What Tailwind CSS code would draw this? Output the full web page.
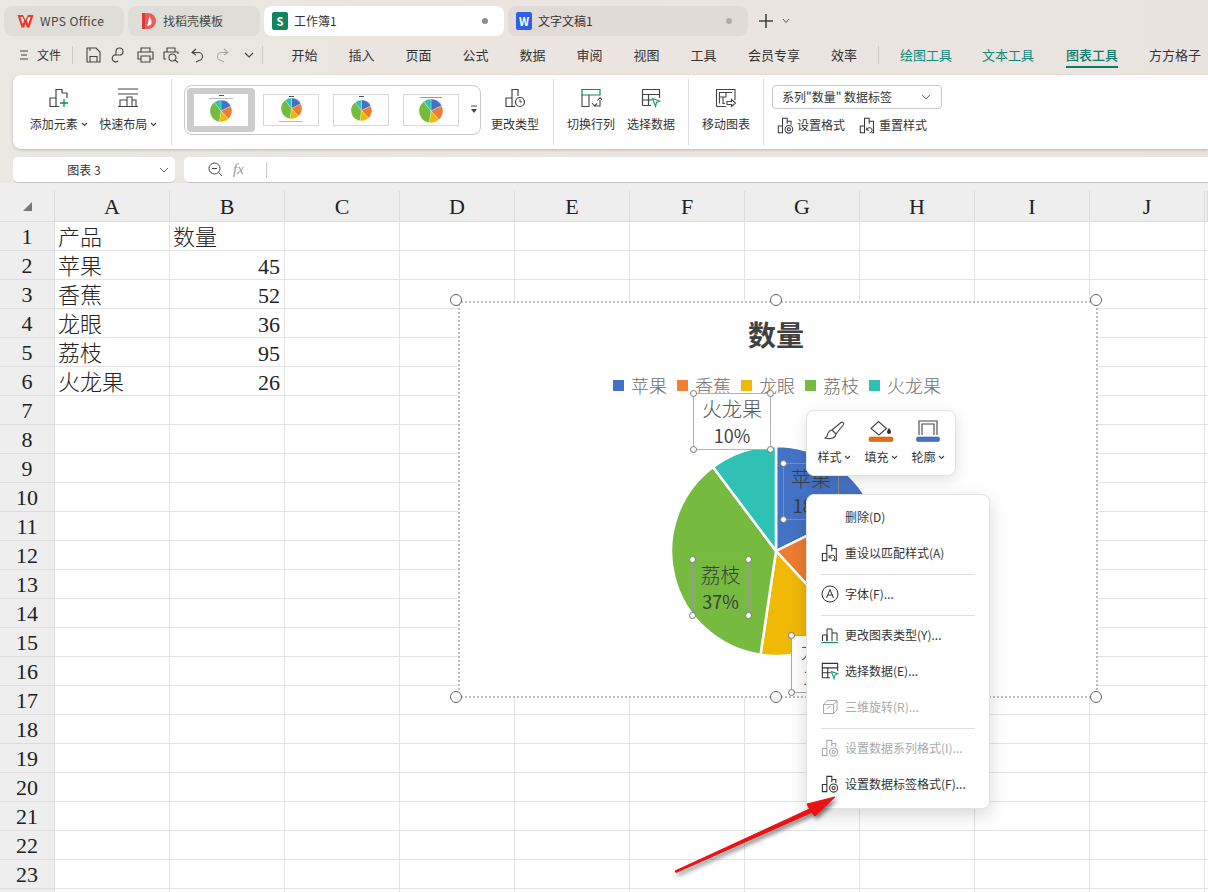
<!DOCTYPE html>
<html lang="zh-CN">
<head>
    <meta charset="UTF-8">
    <title>工作簿1</title>
    <script src="https://cdn.jsdelivr.net/npm/@tailwindcss/browser@4"></script>
</head>
<body class="font-['Noto_Sans_CJK_SC','Noto_Sans',sans-serif] text-[#333] bg-white overflow-hidden">
<!-- shared shapes -->
<svg class="hidden">
    <symbol id="pie" viewBox="0 0 212 212">
        <g transform="translate(1 1)" stroke="#fff" stroke-width="2.500">
        <path d="M105 105V0A105 105 0 0 1 199.2 58.6Z" fill="#4472c4"/>
        <path d="M105 105L199.2 58.6A105 105 0 0 1 176 182.4Z" fill="#ed7d31"/>
        <path d="M105 105L176 182.4A105 105 0 0 1 89.5 208.8Z" fill="#f0b905"/>
        <path d="M105 105L89.5 208.8A105 105 0 0 1 42 21Z" fill="#76bb40"/>
        <path d="M105 105L42 21A105 105 0 0 1 105 0Z" fill="#2ec1b4"/>
        </g>
    </symbol>
    <symbol id="chev" viewBox="0 0 7 5">
        <path d="M1 1L3.500 3.500L6 1" fill="none" stroke="#444" stroke-width="1.100"/>
    </symbol>
    <symbol id="tbl" viewBox="0 0 20 20">
        <path d="M1.5 17.5V1.5H18.5V10M1.5 6.5H18.5M1.5 12H11M7.5 6.5V17.5M1.5 17.5H10" fill="none" stroke="currentColor" stroke-width="1.2"/>
        <path d="M11.5 10.5L18.5 13L15.5 14.5L14.5 18.5Z" fill="none" stroke="#1b9e77" stroke-width="1.2"/>
    </symbol>
    <symbol id="gear" viewBox="0 0 20 20">
        <path d="M1.5 18.5V10.5H6.5V18.5ZM6.5 18.5V1.5H12V8M12 5H16.5V9" fill="none" stroke="currentColor" stroke-width="1.2"/>
        <circle cx="14" cy="14.5" r="4.5" fill="#fff" stroke="currentColor" stroke-width="1.2"/>
        <circle cx="14" cy="14.5" r="1.8" fill="none" stroke="currentColor" stroke-width="1.2"/>
    </symbol>
    <symbol id="reset" viewBox="0 0 20 20">
        <path d="M1.5 18.5V10.5H6.5V18.5ZM6.5 18.5V1.5H12V8M12 5H17V18.5H15" fill="none" stroke="currentColor" stroke-width="1.2"/>
        <path d="M9.5 15A3 3 0 1 1 12.5 18.5M9 12.5V15.5H12" fill="none" stroke="currentColor" stroke-width="1.1"/>
    </symbol>
</svg>

<div class="relative w-[1208px] h-[892px] overflow-hidden">
    <!-- title + ribbon area -->
    <div class="h-[191px] bg-gradient-to-r from-[#e9e8e2] via-[#ece4e1] to-[#ebe3e0]">
        <!-- tabs -->
        <div class="flex items-center h-[30px] translate-y-[6px] pl-1 gap-1 text-xs">
            <div class="w-[120px] h-[30px] rounded-lg bg-[#dfddd7] flex items-center pl-[13px] gap-[6px]">
                <svg class="w-[17px] h-[14px]" viewBox="0 0 17 14"><path d="M0.5 1H6L8.5 6L11 1H16.5L12.5 13.5H9.8L8.5 9.5L7.2 13.5H4.5Z" fill="#e93a2c"/><path d="M3.5 3L5.8 10L7 6.2L5.5 3ZM13.5 3H11.5L10 6.2L11.2 10Z" fill="#fff"/></svg>
                <span class="text-[#444] tracking-[0.4px]">WPS Office</span>
            </div>
            <div class="w-[132px] h-[30px] rounded-lg bg-[#dfddd7] flex items-center pl-[14px] gap-[7px]">
                <svg class="w-[14px] h-[18px]" viewBox="0 0 14 18"><path d="M0 1H6A8 8 0 0 1 6 17H0Z" fill="#ee5a5a"/><path d="M0 1H3V17H0Z" fill="#d93a3a"/><path d="M7.5 4C8.5 7 10 8 9.5 11C9 13.5 6 14.5 4.5 13C6.5 13 6 10 6.5 8C7 6.5 7.5 5.5 7.5 4Z" fill="#fff"/></svg>
                <span class="text-[#444]">找稻壳模板</span>
            </div>
            <div class="w-[240px] h-[30px] rounded-lg bg-white flex items-center pl-2 pr-4 gap-[6px]">
                <span class="w-[16px] h-[18px] rounded-[2px] bg-[#11855f] text-white text-[11px] font-bold flex items-center justify-center">S</span>
                <span class="flex-1">工作簿1</span>
                <span class="w-[6px] h-[6px] rounded-full bg-[#8f8f8f]"></span>
            </div>
            <div class="w-[240px] h-[30px] rounded-lg bg-[#e1dad7] flex items-center pl-2 pr-4 gap-[6px]">
                <span class="w-[16px] h-[18px] rounded-[2px] bg-[#2f5fe8] text-white text-[11px] font-bold flex items-center justify-center">W</span>
                <span class="flex-1">文字文稿1</span>
                <span class="w-[6px] h-[6px] rounded-full bg-[#b0abaa]"></span>
            </div>
            <svg class="w-[16px] h-[16px] ml-[6px]" viewBox="0 0 16 16"><path d="M8 1V15M1 8H15" stroke="#444" stroke-width="1.6"/></svg>
            <svg class="w-[8px] h-[6px] ml-[4px]" viewBox="0 0 8 6"><path d="M1 1L4 4.5L7 1" fill="none" stroke="#555"/></svg>
        </div>

        <!-- menu row -->
        <div class="flex items-center h-[30px] mt-[11px] pb-[2px] text-[13px] text-[#333] whitespace-nowrap">
            <svg class="w-[10px] h-[10px] ml-[19px] shrink-0" viewBox="0 0 10 10"><path d="M1 1H9M2 5H8M1 9H9" stroke="#444"/></svg>
            <span class="ml-[8px] w-[24px] shrink-0 text-xs">文件</span>
            <span class="w-px h-[18px] bg-[#cfcbc6] ml-[11px] shrink-0"></span>
            <div class="flex items-center w-[182px] ml-[7px] text-[#444] shrink-0">
                <svg class="w-[26px] h-[16px]" viewBox="0 0 26 16"><path d="M7 1H16L20 5V15H7ZM10 15V9.5H17V15M10 1V4" fill="none" stroke="currentColor" stroke-width="1.1"/></svg>
                <svg class="w-[26px] h-[16px]" viewBox="0 0 26 16"><path d="M10 8V4.5A3.5 3.5 0 1 1 14 8H10.5A3.5 3.5 0 1 0 12 14" fill="none" stroke="currentColor" stroke-width="1.1"/></svg>
                <svg class="w-[26px] h-[16px]" viewBox="0 0 26 16"><path d="M9 5V1H18V5M9 12H6V5H21V12H18M9 9H18V15H9Z" fill="none" stroke="currentColor" stroke-width="1.1"/></svg>
                <svg class="w-[26px] h-[16px]" viewBox="0 0 26 16"><path d="M9 5V1H17V5M8 12H6V5H20V7M11 10.5A3.5 3.5 0 1 0 18 10.5A3.5 3.5 0 1 0 11 10.5M17 13L20 15.5" fill="none" stroke="currentColor" stroke-width="1.1"/></svg>
                <svg class="w-[26px] h-[16px]" viewBox="0 0 26 16"><path d="M12 2L8 5.5L12 8M8 5.5H14A4 4 0 0 1 15 13.5L12 15" fill="none" stroke="currentColor" stroke-width="1.1"/></svg>
                <svg class="w-[26px] h-[16px]" viewBox="0 0 26 16"><path d="M14 2L18 5.5L14 8M18 5.5H12A4 4 0 0 0 11 13.5L14 15" fill="none" stroke="#aaa" stroke-width="1.1"/></svg>
                <svg class="w-[26px] h-[16px]" viewBox="0 0 26 16"><path d="M9 6L13 10L17 6" fill="none" stroke="currentColor" stroke-width="1.2"/></svg>
            </div>
            <span class="w-px h-[18px] bg-[#cfcbc6] shrink-0"></span>
            <div class="flex items-center ml-[13px] shrink-0">
                <span class="w-[57px] text-center">开始</span>
                <span class="w-[57px] text-center">插入</span>
                <span class="w-[57px] text-center">页面</span>
                <span class="w-[57px] text-center">公式</span>
                <span class="w-[57px] text-center">数据</span>
                <span class="w-[57px] text-center">审阅</span>
                <span class="w-[57px] text-center">视图</span>
                <span class="w-[57px] text-center">工具</span>
                <span class="w-[84px] text-center">会员专享</span>
                <span class="w-[56px] text-center">效率</span>
            </div>
            <span class="w-px h-[18px] bg-[#cfcbc6] ml-[6px] shrink-0"></span>
            <span class="w-[94px] shrink-0 text-center text-[#0f8a7d]">绘图工具</span>
            <span class="w-[70px] shrink-0 text-center text-[#0f8a7d]">文本工具</span>
            <span class="relative w-[98px] shrink-0 text-center text-[#0c7a6c] font-medium">图表工具
                <span class="absolute left-[23px] -bottom-[3px] w-[52px] h-[2px] bg-[#047a69]"></span>
            </span>
            <span class="w-[68px] shrink-0 text-center">方方格子</span>
        </div>

        <!-- ribbon -->
        <div class="flex items-start h-[74px] mt-[4px] ml-[13px] bg-white rounded-l-lg shadow-[0_1px_3px_rgba(0,0,0,0.2)] text-xs">
            <div class="flex items-start w-[150px] pl-[11px] pt-[13px]">
                <div class="w-[70px] flex flex-col items-center">
                    <svg class="w-[22px] h-[20px] text-[#444]" viewBox="0 0 22 20"><path d="M2 18.5V10H8V18.5ZM8 18.5H11M8 10V1.5H14V5M14 5H19V10" fill="none" stroke="currentColor" stroke-width="1.2"/><path d="M16 11V19M12 15H20" stroke="#0a8a5f" stroke-width="1.3"/></svg>
                    <span class="mt-[8px] leading-4 whitespace-nowrap flex items-center gap-[3px]">添加元素<svg class="w-[7px] h-[5px]"><use href="#chev"/></svg></span>
                </div>
                <div class="w-[70px] flex flex-col items-center">
                    <svg class="w-[22px] h-[20px] text-[#444]" viewBox="0 0 22 20"><path d="M1 1H21M1 6H21M1 18.5H21M3 18.5V12H10V18.5M10 18.5V9H15V18.5M15 12H19V18.5" fill="none" stroke="currentColor" stroke-width="1.1"/></svg>
                    <span class="mt-[8px] leading-4 whitespace-nowrap flex items-center gap-[3px]">快速布局<svg class="w-[7px] h-[5px]"><use href="#chev"/></svg></span>
                </div>
            </div>
            <span class="w-px h-[66px] bg-[#ddd] ml-[8px] mt-[4px]"></span>

            <!-- chart style gallery -->
            <div class="relative flex items-center w-[297px] h-[50px] ml-[12px] mt-[10px] border border-[#c9c9c9] rounded-lg pl-[2px]">
                <div class="w-[68px] h-[44px] bg-[#cdcdcd] rounded-sm flex items-center justify-center">
                    <div class="w-[54px] h-[32px] bg-white flex flex-col items-center">
                        <span class="w-[5px] h-px bg-[#555] mt-[1px]"></span>
                        <span class="w-[24px] h-px bg-[#bbb] mt-[2px]"></span>
                        <svg class="w-[22px] h-[22px] mt-[1px]"><use href="#pie"/></svg>
                    </div>
                </div>
                <div class="w-[56px] h-[32px] ml-[8px] border border-[#d8d8d8] flex flex-col items-center">
                    <span class="w-[5px] h-px bg-[#555] mt-[1px]"></span>
                    <svg class="w-[21px] h-[21px] mt-[1px]"><use href="#pie"/></svg>
                    <span class="w-[24px] h-px bg-[#bbb] mt-[2px]"></span>
                </div>
                <div class="w-[56px] h-[32px] ml-[14px] border border-[#d8d8d8] flex flex-col items-center">
                    <span class="w-[5px] h-px bg-[#555] mt-[1px]"></span>
                    <svg class="w-[21px] h-[21px] mt-[3px]"><use href="#pie"/></svg>
                </div>
                <div class="w-[56px] h-[32px] ml-[14px] border border-[#d8d8d8] flex flex-col items-center">
                    <span class="w-[22px] h-px bg-[#b88] mt-[2px]"></span>
                    <svg class="w-[24px] h-[24px] mt-[1px]"><use href="#pie"/></svg>
                </div>
                <svg class="absolute right-[2px] top-[19px] w-[8px] h-[10px]" viewBox="0 0 8 10"><path d="M1 1H7" stroke="#444"/><path d="M1 4H7L4 8Z" fill="#444"/></svg>
            </div>

            <div class="w-[68px] flex flex-col items-center pt-[13px]">
                <svg class="w-[22px] h-[20px] text-[#444]" viewBox="0 0 22 20"><path d="M2 18.5V10H8V18.5ZM8 18.5H11M8 10V1.5H14V8" fill="none" stroke="currentColor" stroke-width="1.2"/><circle cx="16" cy="14" r="4.5" fill="#fff" stroke="currentColor" stroke-width="1.2"/><path d="M16 11.5V14H18" fill="none" stroke="currentColor"/></svg>
                <span class="mt-[8px] leading-4">更改类型</span>
            </div>
            <span class="w-px h-[66px] bg-[#ddd] ml-[4px] mt-[4px]"></span>

            <div class="w-[60px] flex flex-col items-center ml-[7px] pt-[13px]">
                <svg class="w-[22px] h-[20px] text-[#444]" viewBox="0 0 22 20"><path d="M2 1.5H20V7H2Z" fill="none" stroke="#0a8a5f" stroke-width="1.2"/><path d="M2 7V18.5H9V7M14 18H20V12M12 15L14.5 18L17 15.5M20 9.5L17.5 12.5M20 9.5L22 12" fill="none" stroke="currentColor" stroke-width="1.1"/></svg>
                <span class="mt-[8px] leading-4">切换行列</span>
            </div>
            <div class="w-[60px] flex flex-col items-center pt-[13px]">
                <svg class="w-[22px] h-[20px] text-[#444]"><use href="#tbl"/></svg>
                <span class="mt-[8px] leading-4">选择数据</span>
            </div>
            <span class="w-px h-[66px] bg-[#ddd] ml-[7px] mt-[4px]"></span>

            <div class="w-[60px] flex flex-col items-center ml-[7px] pt-[13px]">
                <svg class="w-[22px] h-[20px] text-[#444]" viewBox="0 0 22 20"><path d="M1.5 18.5V1.5H20V12M1.5 18.5H11M4.5 15.5V4.5H17M4.5 9H11V4.5M8 9V15.5H10" fill="none" stroke="currentColor" stroke-width="1.1"/><path d="M12 13.5H16.5V11.5L20.5 15L16.5 18.5V16.5H12Z" fill="#fff" stroke="currentColor" stroke-width="1.1"/></svg>
                <span class="mt-[8px] leading-4">移动图表</span>
            </div>
            <span class="w-px h-[66px] bg-[#ddd] ml-[7px] mt-[4px]"></span>

            <div class="ml-[8px] flex flex-col pt-[10px]">
                <div class="w-[170px] h-[24px] border border-[#c9c9c9] rounded flex items-center pl-[9px] pr-[10px] justify-between">
                    <span>系列"数量" 数据标签</span>
                    <svg class="w-[10px] h-[6px]" viewBox="0 0 10 6"><path d="M1 1L5 5L9 1" fill="none" stroke="#666"/></svg>
                </div>
                <div class="flex items-center mt-[6px] pl-[5px]">
                    <svg class="w-[17px] h-[17px] text-[#333]"><use href="#gear"/></svg>
                    <span class="ml-[3px] leading-5">设置格式</span>
                    <svg class="w-[17px] h-[17px] ml-[14px] text-[#333]"><use href="#reset"/></svg>
                    <span class="ml-[3px] leading-5">重置样式</span>
                </div>
            </div>
        </div>

        <!-- name box and formula bar -->
        <div class="flex h-[26px] mt-[8px] ml-[13px] gap-[9px] text-xs">
            <div class="w-[162px] h-full bg-white rounded-[5px] border-b border-[#c4c4c4] flex items-center relative">
                <span class="w-full text-center pr-[20px]">图表 3</span>
                <svg class="absolute right-[6px] top-[10px] w-[10px] h-[6px]" viewBox="0 0 10 6"><path d="M1 1L5 5L9 1" fill="none" stroke="#666"/></svg>
            </div>
            <div class="flex-1 h-full bg-white rounded-l-[5px] border-b border-[#c4c4c4] flex items-center pl-[24px]">
                <svg class="w-[15px] h-[15px]" viewBox="0 0 15 15"><circle cx="6.5" cy="6.5" r="5.5" fill="none" stroke="#444"/><path d="M4 6.5H9M10.5 10.5L14 14" stroke="#444"/></svg>
                <span class="ml-[10px] w-[33px] text-[#999] italic font-['Liberation_Serif',serif] text-[15px]">fx</span>
                <span class="w-px h-[16px] bg-[#ccc]"></span>
            </div>
        </div>
        <div class="h-[8px] bg-[#eeeeee]"></div>
    </div>

    <!-- sheet: filled in by the script below -->
    <div id="sheet" class="grid grid-cols-[55px_repeat(10,115px)_3px] grid-rows-[31px] auto-rows-[29px] bg-white font-['Liberation_Serif','Noto_Sans_CJK_SC',serif] font-light text-[22px] text-[#222]"></div>

    <!-- chart -->
    <div class="absolute left-[458px] top-[301px] w-[640px] h-[397px] bg-white border-2 border-dotted border-[#bdbdbd] font-['Noto_Sans_CJK_SC',sans-serif] text-[#6f6f6f]">
        <div class="text-center text-[28px] font-bold text-[#404040] leading-9 mt-[13px] pr-[4px]">数量</div>
        <div class="flex items-center justify-center gap-[10px] mt-[21px] text-[18px] font-light leading-6 pr-[2px]">
            <span class="flex items-center gap-[7px]"><i class="w-[11px] h-[11px] bg-[#4472c4]"></i>苹果</span>
            <span class="flex items-center gap-[7px]"><i class="w-[11px] h-[11px] bg-[#f08030]"></i>香蕉</span>
            <span class="flex items-center gap-[7px]"><i class="w-[11px] h-[11px] bg-[#f0b905]"></i>龙眼</span>
            <span class="flex items-center gap-[7px]"><i class="w-[11px] h-[11px] bg-[#76bb40]"></i>荔枝</span>
            <span class="flex items-center gap-[7px]"><i class="w-[11px] h-[11px] bg-[#2ec1b4]"></i>火龙果</span>
        </div>
        <svg class="absolute left-[210px] top-[142px] w-[212px] h-[212px]"><use href="#pie"/></svg>

        <!-- data labels -->
        <div class="absolute left-[233px] top-[90px] w-[78px] h-[57px] bg-white border border-[#b0b0bc] flex flex-col items-center justify-center text-[20px] leading-[26px] font-light text-[#555]">
            <span>火龙果</span><span class="text-[18px] font-normal text-[#444]">10%</span>
            <i class="absolute -left-[4px] -top-[4px] w-[7px] h-[7px] rounded-full bg-white border border-[#777]"></i>
            <i class="absolute -right-[4px] -top-[4px] w-[7px] h-[7px] rounded-full bg-white border border-[#777]"></i>
            <i class="absolute -left-[4px] -bottom-[4px] w-[7px] h-[7px] rounded-full bg-white border border-[#777]"></i>
            <i class="absolute -right-[4px] -bottom-[4px] w-[7px] h-[7px] rounded-full bg-white border border-[#777]"></i>
        </div>
        <div class="absolute left-[323px] top-[160px] w-[56px] h-[57px] border border-[#8c8c8c] flex flex-col items-center justify-center text-[20px] leading-[26px] font-light text-[#3d3d3d]">
            <span>苹果</span><span class="text-[18px] font-normal">18%</span>
            <i class="absolute -left-[4px] -top-[4px] w-[7px] h-[7px] rounded-full bg-white border border-[#777]"></i>
            <i class="absolute -left-[4px] -bottom-[4px] w-[7px] h-[7px] rounded-full bg-white border border-[#777]"></i>
        </div>
        <div class="absolute left-[232px] top-[256px] w-[57px] h-[57px] border border-[#999] flex flex-col items-center justify-center text-[20px] leading-[26px] font-light text-[#3d3d3d]">
            <span>荔枝</span><span class="text-[18px] font-normal">37%</span>
            <i class="absolute -left-[4px] -top-[4px] w-[7px] h-[7px] rounded-full bg-white border border-[#777]"></i>
            <i class="absolute -right-[4px] -top-[4px] w-[7px] h-[7px] rounded-full bg-white border border-[#777]"></i>
            <i class="absolute -left-[4px] -bottom-[4px] w-[7px] h-[7px] rounded-full bg-white border border-[#777]"></i>
            <i class="absolute -right-[4px] -bottom-[4px] w-[7px] h-[7px] rounded-full bg-white border border-[#777]"></i>
        </div>
        <div class="absolute left-[331px] top-[332px] w-[60px] h-[58px] bg-white border border-[#a8a8b4] flex flex-col items-center justify-center text-[20px] leading-[26px] font-light text-[#555]">
            <span>龙眼</span><span class="text-[18px] font-normal">14%</span>
            <i class="absolute -left-[4px] -top-[4px] w-[7px] h-[7px] rounded-full bg-white border border-[#777]"></i>
            <i class="absolute -left-[4px] -bottom-[4px] w-[7px] h-[7px] rounded-full bg-white border border-[#777]"></i>
        </div>

        <!-- chart handles -->
        <i class="absolute -left-[10px] -top-[9px] w-[12px] h-[12px] rounded-full bg-white border border-[#666]"></i>
        <i class="absolute left-[310px] -top-[9px] w-[12px] h-[12px] rounded-full bg-white border border-[#666]"></i>
        <i class="absolute -right-[6px] -top-[9px] w-[12px] h-[12px] rounded-full bg-white border border-[#666]"></i>
        <i class="absolute -left-[10px] -bottom-[7px] w-[12px] h-[12px] rounded-full bg-white border border-[#666]"></i>
        <i class="absolute left-[310px] -bottom-[7px] w-[12px] h-[12px] rounded-full bg-white border border-[#666]"></i>
        <i class="absolute -right-[6px] -bottom-[7px] w-[12px] h-[12px] rounded-full bg-white border border-[#666]"></i>
    </div>

    <!-- mini toolbar -->
    <div class="absolute left-[806px] top-[410px] w-[150px] h-[66px] flex justify-center gap-[1px] bg-white border border-[#e2e2e2] rounded-lg shadow-[0_4px_14px_rgba(0,0,0,0.12)] text-xs text-[#333]">
        <div class="w-[46px] flex flex-col items-center pt-[9px]">
            <svg class="w-[24px] h-[22px]" viewBox="0 0 24 22"><path d="M10 10L19 2.5C20.5 1.5 22.5 3 21.5 4.5L14 14ZM10 10C6 10.5 5.5 14 5 16.5L3 18C8 19.5 13.5 18.5 14 14Z" fill="none" stroke="#444" stroke-width="1.1"/></svg>
            <span class="mt-[7px] leading-4 whitespace-nowrap flex items-center gap-[2px]">样式<svg class="w-[7px] h-[5px]"><use href="#chev"/></svg></span>
        </div>
        <div class="w-[46px] flex flex-col items-center pt-[9px]">
            <svg class="w-[26px] h-[22px]" viewBox="0 0 26 22"><path d="M3 8.5L10.5 1.5L18.5 8.5L11 15Z" fill="none" stroke="#444" stroke-width="1.1" /><path d="M21 8C22.5 10 23 11 23 12A2 2 0 0 1 19 12C19 11 19.500 10 21 8Z" fill="#333"/><rect x="1" y="17" width="24" height="4.500" rx="1.500" fill="#e36c14" stroke="#b6560f" stroke-width="0.5"/></svg>
            <span class="mt-[7px] leading-4 whitespace-nowrap flex items-center gap-[2px]">填充<svg class="w-[7px] h-[5px]"><use href="#chev"/></svg></span>
        </div>
        <div class="w-[46px] flex flex-col items-center pt-[9px]">
            <svg class="w-[24px] h-[22px]" viewBox="0 0 24 22"><path d="M3 15V1H21V15M6 15V4H18V15" fill="none" stroke="#444" stroke-width="1.1"/><rect x="0.500" y="17" width="23" height="4.500" rx="1.500" fill="#4472c4" stroke="#36599c" stroke-width="0.5"/></svg>
            <span class="mt-[7px] leading-4 whitespace-nowrap flex items-center gap-[2px]">轮廓<svg class="w-[7px] h-[5px]"><use href="#chev"/></svg></span>
        </div>
    </div>

    <!-- context menu -->
    <div class="absolute left-[806px] top-[494px] w-[184px] h-[315px] pt-[5px] bg-white border border-[#e2e2e2] rounded-lg shadow-[0_6px_18px_rgba(0,0,0,0.16)] text-xs text-[#333] font-['Noto_Sans_CJK_SC',sans-serif]">
        <div class="flex items-center h-[36px] pl-[38px] pb-[2px]">删除(D)</div>
        <div class="flex items-center h-[36px] pl-[14px] pb-[2px] gap-[6px]"><svg class="w-[18px] h-[18px] text-[#333]"><use href="#reset"/></svg>重设以匹配样式(A)</div>
        <div class="h-px bg-[#dedede] mx-[14px] mt-[2px]"></div>
        <div class="flex items-center h-[40px] pl-[14px] pb-[2px] gap-[6px]">
            <svg class="w-[18px] h-[18px]" viewBox="0 0 18 18"><circle cx="9" cy="9" r="8" fill="none" stroke="#333"/><path d="M5.500 13L9 4.500L12.500 13M6.800 10H11.200" fill="none" stroke="#333"/></svg>字体(F)...
        </div>
        <div class="h-px bg-[#dedede] mx-[14px]"></div>
        <div class="flex items-center h-[40px] pl-[14px] pb-[2px] gap-[6px]">
            <svg class="w-[18px] h-[18px]" viewBox="0 0 18 18"><path d="M1.500 15V9H6V15M6 15V3H11V15M11 7H16V15" fill="none" stroke="#333"/><path d="M0.500 16.500H17" stroke="#0a8a5f" stroke-width="1.100"/></svg>更改图表类型(Y)...
        </div>
        <div class="flex items-center h-[32px] pl-[14px] pb-[2px] gap-[6px]"><svg class="w-[18px] h-[18px] text-[#333]"><use href="#tbl"/></svg>选择数据(E)...</div>
        <div class="flex items-center h-[40px] pl-[14px] pb-[2px] gap-[6px] text-[#aaa]">
            <svg class="w-[18px] h-[18px]" viewBox="0 0 18 18"><path d="M2.500 6.500L6 2.500H16V12L12.500 15.500H2.500ZM2.500 6.500H12.500V15.500M12.500 6.500L16 2.500M6 11A3 3 0 0 1 10 9" fill="none" stroke="#aaa"/></svg>三维旋转(R)...
        </div>
        <div class="h-px bg-[#dedede] mx-[14px]"></div>
        <div class="flex items-center h-[40px] pl-[14px] pb-[2px] gap-[6px] text-[#aaa]"><svg class="w-[18px] h-[18px] text-[#aaa]"><use href="#gear"/></svg>设置数据系列格式(I)...</div>
        <div class="flex items-center h-[32px] pl-[14px] pb-[2px] gap-[6px]"><svg class="w-[18px] h-[18px] text-[#333]"><use href="#gear"/></svg>设置数据标签格式(F)...</div>
    </div>

    <!-- red arrow -->
    <svg class="absolute left-[660px] top-[785px] w-[190px] h-[100px] drop-shadow-[2px_3px_2px_rgba(0,0,0,0.5)]" viewBox="0 0 190 100">
        <path d="M15 86L149.500 24L147 19L175 12L155 31L151.500 27.500L16 87.500Z" fill="#ee1111" stroke="#ee1111" stroke-width="1" stroke-linejoin="round"/>
    </svg>
</div>

<script>
    // column headers, row numbers and the few filled cells
    const cols = ['A', 'B', 'C', 'D', 'E', 'F', 'G', 'H', 'I', 'J', ''];
    const data = [['产品', '数量'], ['苹果', 45], ['香蕉', 52], ['龙眼', 36], ['荔枝', 95], ['火龙果', 26]];
    const head = 'flex items-center justify-center bg-[#eeeeee] border-r border-b border-[#dcdcdc] font-["Noto_Sans"] font-normal text-[20px] text-[#555]';
    const rowHead = 'pb-[4px]';
    const cell = 'flex items-center border-r border-b border-[#e3e3e3] overflow-hidden whitespace-nowrap pl-[3px] pr-[4px] pt-[3px]';
    const right = 'justify-end';
    let html = `<div class="${head}"><svg class="w-[11px] h-[11px] mt-[1px]" viewBox="0 0 11 11"><path d="M10 1V10H1Z" fill="#777"/></svg></div>`;
    cols.forEach(c => html += `<div class="${head}">${c}</div>`);
    // row 24 only shows its top edge at the bottom of the window
    for (let r = 0; r < 24; r++) {
        html += `<div class="${head} ${rowHead}">${r < 23 ? r + 1 : ''}</div>`;
        cols.forEach((c, i) => {
            const v = data[r] && data[r][i] !== undefined ? data[r][i] : '';
            html += `<div class="${cell} ${typeof v === 'number' ? right : ''}">${v}</div>`;
        });
    }
    document.getElementById('sheet').innerHTML = html;
</script>
</body>
</html>
